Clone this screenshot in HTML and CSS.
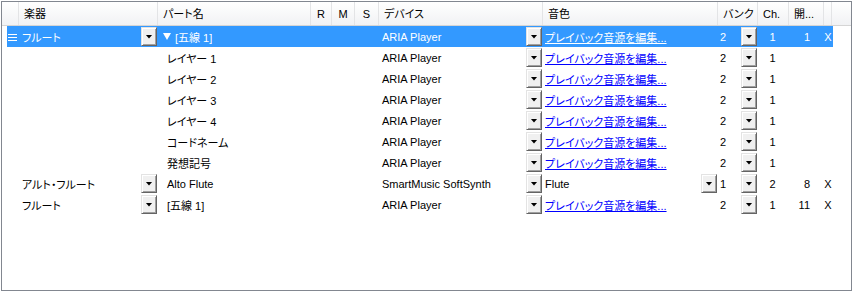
FILE: index.html
```html
<!DOCTYPE html>
<html lang="ja">
<head>
    <meta charset="UTF-8">
    <title>楽器リスト</title>
    <link rel="stylesheet" href="styles.css">
</head>
<body>

    <div class="grid">
        <!-- Header -->
        <div class="head">
            <div class="hc w-sel"></div>
            <div class="hc w-inst">楽器</div>
            <div class="hc w-part">パート名</div>
            <div class="hc w-r mid">R</div>
            <div class="hc w-m mid">M</div>
            <div class="hc w-s mid">S</div>
            <div class="hc w-dev">デバイス</div>
            <div class="hc w-snd">音色</div>
            <div class="hc w-bank">バンク</div>
            <div class="hc w-ch">Ch.</div>
            <div class="hc w-open">開...</div>
            <div class="hc w-x"></div>
            <div class="hc w-rest"></div>
        </div>

        <!-- Rows -->
        <div class="row sel">
            <div class="cell w-hnd">
                <svg width="9" height="8" viewBox="0 0 9 8"><path d="M0 1.5h9M0 4.5h9M0 7.5h9" stroke="#fff" stroke-width="1"/></svg>
            </div>
            <div class="cell w-inst"><span class="txt">フルート</span><span class="dd"></span></div>
            <div class="cell w-part grp">
                <svg class="tri" width="8" height="7" viewBox="0 0 8 7"><polygon points="0,0 8,0 4,7" fill="#fff"/></svg>
                <span>[五線 1]</span>
            </div>
            <div class="cell w-rms"></div>
            <div class="cell w-dev"><span class="txt">ARIA Player</span><span class="dd"></span></div>
            <div class="cell w-snd"><a class="lnk">プレイバック音源を編集...</a></div>
            <div class="cell w-bank"><span class="txt">2</span><span class="dd"></span></div>
            <div class="cell w-ch">1</div>
            <div class="cell w-open">1</div>
            <div class="cell w-x">X</div>
        </div>

        <div class="row">
            <div class="cell w-hnd"></div>
            <div class="cell w-inst"></div>
            <div class="cell w-part sub">レイヤー 1</div>
            <div class="cell w-rms"></div>
            <div class="cell w-dev"><span class="txt">ARIA Player</span><span class="dd"></span></div>
            <div class="cell w-snd"><a class="lnk">プレイバック音源を編集...</a></div>
            <div class="cell w-bank"><span class="txt">2</span><span class="dd"></span></div>
            <div class="cell w-ch">1</div>
            <div class="cell w-open"></div>
            <div class="cell w-x"></div>
        </div>

        <div class="row">
            <div class="cell w-hnd"></div>
            <div class="cell w-inst"></div>
            <div class="cell w-part sub">レイヤー 2</div>
            <div class="cell w-rms"></div>
            <div class="cell w-dev"><span class="txt">ARIA Player</span><span class="dd"></span></div>
            <div class="cell w-snd"><a class="lnk">プレイバック音源を編集...</a></div>
            <div class="cell w-bank"><span class="txt">2</span><span class="dd"></span></div>
            <div class="cell w-ch">1</div>
            <div class="cell w-open"></div>
            <div class="cell w-x"></div>
        </div>

        <div class="row">
            <div class="cell w-hnd"></div>
            <div class="cell w-inst"></div>
            <div class="cell w-part sub">レイヤー 3</div>
            <div class="cell w-rms"></div>
            <div class="cell w-dev"><span class="txt">ARIA Player</span><span class="dd"></span></div>
            <div class="cell w-snd"><a class="lnk">プレイバック音源を編集...</a></div>
            <div class="cell w-bank"><span class="txt">2</span><span class="dd"></span></div>
            <div class="cell w-ch">1</div>
            <div class="cell w-open"></div>
            <div class="cell w-x"></div>
        </div>

        <div class="row">
            <div class="cell w-hnd"></div>
            <div class="cell w-inst"></div>
            <div class="cell w-part sub">レイヤー 4</div>
            <div class="cell w-rms"></div>
            <div class="cell w-dev"><span class="txt">ARIA Player</span><span class="dd"></span></div>
            <div class="cell w-snd"><a class="lnk">プレイバック音源を編集...</a></div>
            <div class="cell w-bank"><span class="txt">2</span><span class="dd"></span></div>
            <div class="cell w-ch">1</div>
            <div class="cell w-open"></div>
            <div class="cell w-x"></div>
        </div>

        <div class="row">
            <div class="cell w-hnd"></div>
            <div class="cell w-inst"></div>
            <div class="cell w-part sub">コードネーム</div>
            <div class="cell w-rms"></div>
            <div class="cell w-dev"><span class="txt">ARIA Player</span><span class="dd"></span></div>
            <div class="cell w-snd"><a class="lnk">プレイバック音源を編集...</a></div>
            <div class="cell w-bank"><span class="txt">2</span><span class="dd"></span></div>
            <div class="cell w-ch">1</div>
            <div class="cell w-open"></div>
            <div class="cell w-x"></div>
        </div>

        <div class="row">
            <div class="cell w-hnd"></div>
            <div class="cell w-inst"></div>
            <div class="cell w-part sub">発想記号</div>
            <div class="cell w-rms"></div>
            <div class="cell w-dev"><span class="txt">ARIA Player</span><span class="dd"></span></div>
            <div class="cell w-snd"><a class="lnk">プレイバック音源を編集...</a></div>
            <div class="cell w-bank"><span class="txt">2</span><span class="dd"></span></div>
            <div class="cell w-ch">1</div>
            <div class="cell w-open"></div>
            <div class="cell w-x"></div>
        </div>

        <div class="row">
            <div class="cell w-hnd"></div>
            <div class="cell w-inst"><span class="txt">アルト・フルート</span><span class="dd"></span></div>
            <div class="cell w-part sub">Alto Flute</div>
            <div class="cell w-rms"></div>
            <div class="cell w-dev"><span class="txt">SmartMusic SoftSynth</span><span class="dd"></span></div>
            <div class="cell w-snd"><span class="txt">Flute</span><span class="dd"></span></div>
            <div class="cell w-bank"><span class="txt">1</span><span class="dd"></span></div>
            <div class="cell w-ch">2</div>
            <div class="cell w-open">8</div>
            <div class="cell w-x">X</div>
        </div>

        <div class="row">
            <div class="cell w-hnd"></div>
            <div class="cell w-inst"><span class="txt">フルート</span><span class="dd"></span></div>
            <div class="cell w-part sub">[五線 1]</div>
            <div class="cell w-rms"></div>
            <div class="cell w-dev"><span class="txt">ARIA Player</span><span class="dd"></span></div>
            <div class="cell w-snd"><a class="lnk">プレイバック音源を編集...</a></div>
            <div class="cell w-bank"><span class="txt">2</span><span class="dd"></span></div>
            <div class="cell w-ch">1</div>
            <div class="cell w-open">11</div>
            <div class="cell w-x">X</div>
        </div>
    </div>

</body>
</html>
```

FILE: styles.css
```css
/* Global */
* {
    box-sizing: border-box;
}

body {
    margin: 0;
    background: #fff;
    color: #000;
    font-family: "Liberation Sans", "Noto Sans CJK JP", sans-serif;
    font-size: 11px;
    font-feature-settings: "palt" 1;
}

/* Frame */
.grid {
    margin: 1px;
    width: 851px;
    height: 290px;
    border: 1px solid #828790;
    overflow: hidden;
}

/* Header */
.head {
    display: flex;
    height: 24px;
    background: linear-gradient(#ffffff, #f1f2f4);
    border-bottom: 1px solid #d5d5d5;
}

.hc {
    border-left: 1px solid #e3e4e6;
    padding: 2px 0 0 5px;
    line-height: 21px;
    white-space: nowrap;
}

.hc.w-sel {
    width: 16px;
    border-left: none;
}

.hc.mid {
    padding-left: 0;
    text-align: center;
}

.w-inst { width: 139px; }
.w-part { width: 153px; }
.w-r { width: 21px; }
.w-m { width: 23px; }
.w-s { width: 24px; }
.w-rms { width: 68px; }
.w-dev { width: 164px; }
.w-snd { width: 175px; }
.w-bank { width: 40px; }
.w-ch { width: 31px; }
.w-open { width: 35px; }
.w-x { width: 8px; }
.w-rest { flex: 1; }

/* Rows */
.row {
    display: flex;
    width: 826px;
    height: 21px;
    margin-left: 5px;
}

.row.sel {
    background: #3399ff;
    color: #fff;
}

.cell {
    display: flex;
    align-items: center;
    white-space: nowrap;
}

.cell.w-hnd {
    width: 11px;
    padding-left: 1px;
}

.cell .txt {
    padding-left: 4px;
}

.cell.w-snd .txt,
.cell.w-bank .txt {
    padding-left: 3px;
}

.cell.w-part.grp {
    padding-left: 6px;
}

.cell.w-part .tri {
    margin-right: 4px;
}

.cell.sub {
    padding-left: 10px;
}

.cell.w-ch {
    justify-content: center;
}

.cell.w-open {
    justify-content: flex-end;
    padding-right: 13px;
}

.cell.w-x {
    width: 10px;
    justify-content: center;
}

.lnk {
    color: #0000ff;
    text-decoration: underline;
    padding-left: 3px;
}

.row.sel .lnk {
    color: #fff;
}

/* Drop buttons */
.dd {
    display: flex;
    align-items: center;
    justify-content: center;
    width: 16px;
    height: 19px;
    margin: 1px 0 0 auto;
    align-self: flex-start;
    background: #f0f0f0;
    border: 1px solid;
    border-color: #e3e3e3 #646464 #646464 #e3e3e3;
    box-shadow: inset 1px 1px #fff, inset -1px -1px #a0a0a0;
}

.dd::after {
    content: "";
    width: 7px;
    height: 4px;
    background: #000;
    clip-path: polygon(0 0, 100% 0, 50% 100%);
}
```
